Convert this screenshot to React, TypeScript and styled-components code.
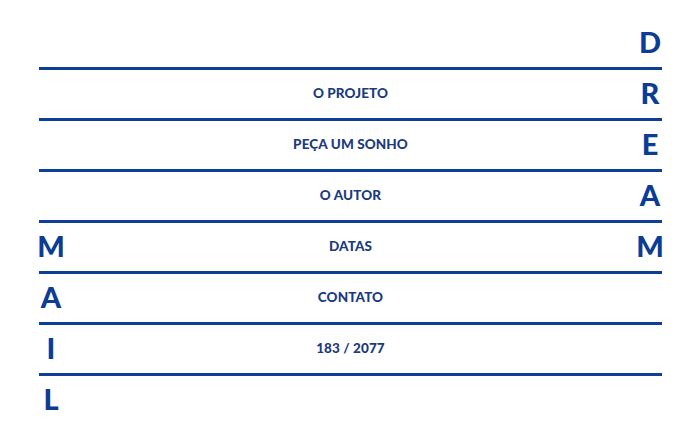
import React from "react";
import styled, { createGlobalStyle } from "styled-components";

const GlobalStyle = createGlobalStyle`
  html, body {
    margin: 0;
    padding: 0;
    background: #ffffff;
  }
  body {
    font-family: "Lato", "Liberation Sans", sans-serif;
  }
`;

const Page = styled.div`
  width: 700px;
  height: 438px;
  box-sizing: border-box;
  padding: 19px 38px 0 39px;
  background: #ffffff;
  overflow: hidden;
`;

const Row = styled.div<{ $ruled: boolean }>`
  display: grid;
  grid-template-columns: 24px 1fr 24px;
  align-items: center;
  justify-items: center;
  height: 48px;
  border-bottom: ${(p) => (p.$ruled ? "3px solid #0d3f95" : "none")};
`;

const Letter = styled.span`
  font-family: "Lato", "Liberation Sans", sans-serif;
  font-weight: 900;
  font-size: 29px;
  line-height: 1;
  color: #0c3d92;
  margin-top: -4px;
`;

const MenuItem = styled.a`
  font-family: "Lato", "Liberation Sans", sans-serif;
  font-weight: 900;
  font-size: 13.5px;
  letter-spacing: 0.1px;
  color: #1b3b7c;
  text-decoration: none;
  margin-top: -2px;
  cursor: pointer;
`;

const rows: { left?: string; label?: string; right?: string }[] = [
  { right: "D" },
  { label: "O PROJETO", right: "R" },
  { label: "PEÇA UM SONHO", right: "E" },
  { label: "O AUTOR", right: "A" },
  { left: "M", label: "DATAS", right: "M" },
  { left: "A", label: "CONTATO" },
  { left: "I", label: "183 / 2077" },
  { left: "L" },
];

export default function App() {
  return (
    <>
      <GlobalStyle />
      <Page>
        {rows.map((r, i) => (
          <Row key={i} $ruled={i < rows.length - 1}>
            <Letter>{r.left}</Letter>
            {r.label ? <MenuItem>{r.label}</MenuItem> : <span />}
            <Letter>{r.right}</Letter>
          </Row>
        ))}
      </Page>
    </>
  );
}
